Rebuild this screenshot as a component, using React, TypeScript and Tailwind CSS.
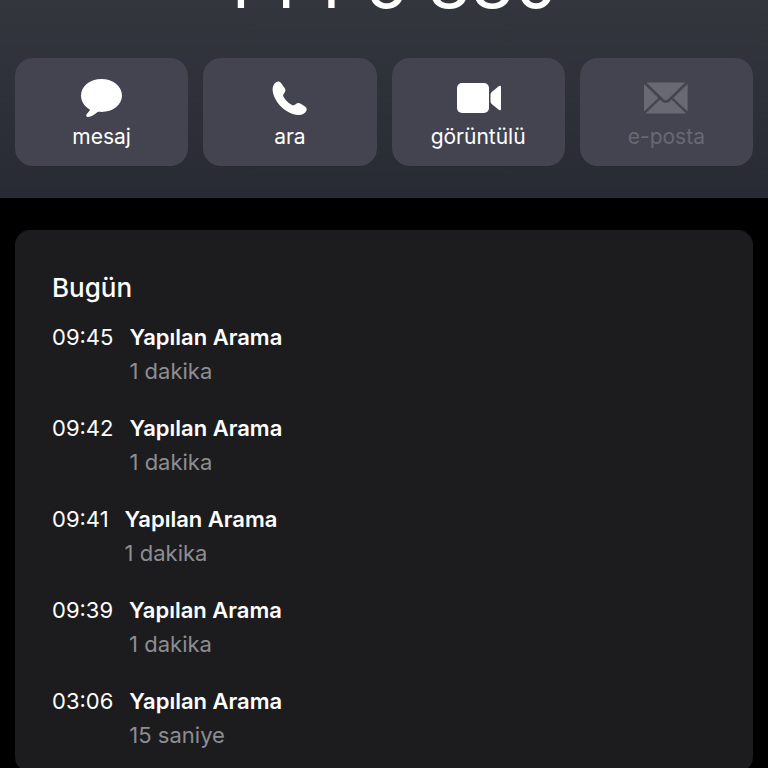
import type { ReactNode } from "react";

const MessageIcon = () => (
  <svg viewBox="0 0 46 46" className="h-[46px] w-[46px]" fill="currentColor" aria-hidden="true">
    <path d="M22.500 4C11 4 2 11.300 2 20.500c0 5.600 3.100 10.700 8.400 13.700.5.300.6.800.2 1.300-.6 1.100-1.400 2.100-2.600 3.200-1.400 1.300-.9 3.400 1 3.200 3.400-.3 6.200-2 8.600-4.100.8-.8 1.500-1.100 2.500-1 .8.100 1.600.1 2.400.1C34 36.900 43 29.700 43 20.500S34 4 22.500 4z" />
  </svg>
);

const PhoneIcon = () => (
  <svg viewBox="0 0 46 46" className="h-[46px] w-[46px]" fill="currentColor" aria-hidden="true">
    <path d="M5.600 15c-.2-3.500 1.500-6.500 3.700-7.900 1.800-1.100 3.700-.5 4.900 1.100l3.400 4.900c1.200 1.900 1 3.300-.3 4.900-1.400 1.700-1.500 2.500-.5 4.300 1.700 2.900 4.600 5.700 7.700 7.500 1.600.9 2.500.7 4.100-.6 1.700-1.400 3.300-1.700 5.100-.5l4.300 2.800c1.700 1.200 2.200 2.700 1.200 4.500-1.500 2.600-4.500 4.300-8 4C19.300 39.300 6.500 27 5.600 15z" />
  </svg>
);

const VideoIcon = () => (
  <svg viewBox="0 0 46 46" className="h-[46px] w-[46px]" fill="currentColor" aria-hidden="true">
    <rect x="2" y="8" width="32" height="30" rx="5" />
    <path d="M35.500 19.500c0-1 .4-1.800 1.200-2.500l6.700-5.500c1.500-1.200 3.100-.8 3.100 1v21c0 1.800-1.600 2.200-3.100 1L36.700 29c-.8-.7-1.200-1.500-1.200-2.500z" />
  </svg>
);

const MailIcon = () => (
  <svg viewBox="0 0 46 46" className="h-[46px] w-[46px]" fill="currentColor" aria-hidden="true">
    <path d="M3.400 7.500h38.800L25 24.200c-1.400 1.300-3 1.300-4.400 0z" />
    <path d="M1 9 15.300 23 1 36.500z" />
    <path d="M44.600 9 30.300 23l14.300 13.500z" />
    <path d="m17 24.600 1.800 1.700c2.500 2.200 5.500 2.200 8 0l1.800-1.700L42.800 38.200c-.3.200-.6.300-1 .3H3.800c-.4 0-.7-.1-1-.3z" />
  </svg>
);

type Action = { name: string; icon: ReactNode; disabled?: boolean };

const actions: Action[] = [
  { name: "mesaj", icon: <MessageIcon /> },
  { name: "ara", icon: <PhoneIcon /> },
  { name: "görüntülü", icon: <VideoIcon /> },
  { name: "e-posta", icon: <MailIcon />, disabled: true },
];

const calls = [
  { time: "09:45", type: "Yapılan Arama", duration: "1 dakika" },
  { time: "09:42", type: "Yapılan Arama", duration: "1 dakika" },
  { time: "09:41", type: "Yapılan Arama", duration: "1 dakika" },
  { time: "09:39", type: "Yapılan Arama", duration: "1 dakika" },
  { time: "03:06", type: "Yapılan Arama", duration: "15 saniye" },
];

const ContactHeader = () => (
  <header className="overflow-hidden bg-linear-to-b from-[#34363e] to-[#282b34] px-[15px] pb-8">
    <h1 className="-mt-14 mb-9 text-center text-[70px] leading-[78px] font-normal">444 5 880</h1>
    <div className="grid grid-cols-4 gap-[15px]">
      {actions.map((action) => (
        <button
          key={action.name}
          type="button"
          disabled={action.disabled}
          className="flex h-[108px] flex-col items-center rounded-[18px] bg-[#43444f] pt-[17px] text-white disabled:text-[#686973]"
        >
          {action.icon}
          <span className="text-[21px] leading-8">{action.name}</span>
        </button>
      ))}
    </div>
  </header>
);

const CallHistory = () => (
  <section className="mx-[15px] mt-8 rounded-[15px] bg-[#1c1c1e] px-[37px] pt-10 pb-5">
    <h2 className="text-[26px] leading-9 font-medium">Bugün</h2>
    <ul className="mt-[14px] space-y-[23px]">
      {calls.map((call) => (
        <li key={call.time} className="flex gap-4 text-[22px] leading-[34px]">
          <time>{call.time}</time>
          <div>
            <p className="font-semibold">{call.type}</p>
            <p className="text-[#8d8d92]">{call.duration}</p>
          </div>
        </li>
      ))}
    </ul>
  </section>
);

const App = () => {
  return (
    <main className="min-h-screen bg-black font-['Inter',sans-serif] text-white">
      <ContactHeader />
      <CallHistory />
    </main>
  );
};

export default App;
